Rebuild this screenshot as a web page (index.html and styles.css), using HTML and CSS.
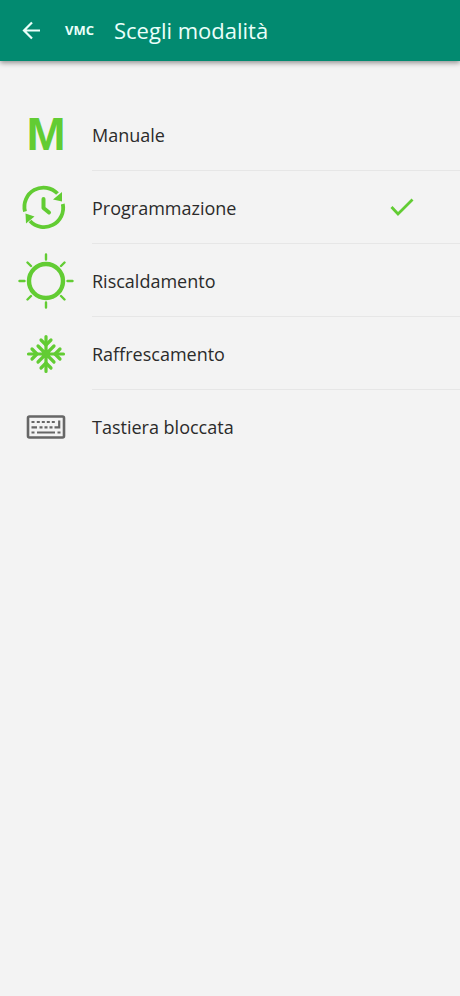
FILE: index.html
```
<!DOCTYPE html>
<html lang="it">
<head>
    <meta charset="UTF-8">
    <meta name="viewport" content="width=device-width, initial-scale=1.0">
    <title>Scegli modalità</title>
    <link rel="stylesheet" href="styles.css">
</head>
<body>
    <!-- Top bar -->
    <header class="app-bar">
        <button type="button" class="back" aria-label="Indietro">
            <svg width="20" height="20" viewBox="0 0 20 20" fill="none" stroke="currentColor" stroke-width="2.200">
                <path d="M19 10.500H3M11 2.500L3 10.500L11 18.500"/>
            </svg>
        </button>
        <span class="device">VMC</span>
        <h1 class="title">Scegli modalità</h1>
    </header>

    <!-- Mode list -->
    <main>
        <ul class="modes">
            <li class="mode">
                <button type="button" class="mode-button">
                    <span class="icon letter" aria-hidden="true">M</span>
                    <span class="label">Manuale</span>
                </button>
            </li>
            <li class="mode">
                <button type="button" class="mode-button" aria-pressed="true">
                    <svg class="icon" viewBox="0 0 60 60" fill="none" stroke="currentColor" stroke-width="3.800" aria-hidden="true">
                        <path d="M9 33.500A19.200 19.200 0 0 1 41.500 15.500M46.800 26A19.200 19.200 0 0 1 14 43"/>
                        <path d="M27.500 21V30L33 34.500" stroke-width="4" stroke-linecap="round" stroke-linejoin="round"/>
                        <path d="M46 14V23.500L37 21.500ZM9.500 35.500L18.500 38.500L10 45.500Z" fill="currentColor" stroke="none"/>
                    </svg>
                    <span class="label">Programmazione</span>
                    <svg class="check" width="24" height="20" viewBox="0 0 24 20" fill="none" stroke="currentColor" stroke-width="2.800" aria-hidden="true">
                        <path d="M1.500 9L8 16L22.500 1.500"/>
                    </svg>
                </button>
            </li>
            <li class="mode">
                <button type="button" class="mode-button">
                    <svg class="icon" viewBox="0 0 60 60" fill="none" stroke="currentColor" stroke-linecap="round" aria-hidden="true">
                        <circle cx="30" cy="30" r="17" stroke-width="4.400"/>
                        <path d="M30 3.500V8.500M30 51.500V56.500M3.500 30H8.500M51.500 30H56.500M11.500 11.500L15 15M45 45L48.500 48.500M48.500 11.500L45 15M15 45L11.500 48.500" stroke-width="2.400"/>
                    </svg>
                    <span class="label">Riscaldamento</span>
                </button>
            </li>
            <li class="mode">
                <button type="button" class="mode-button">
                    <svg class="icon" viewBox="0 0 60 60" fill="none" stroke="currentColor" stroke-width="3.200" stroke-linecap="round" stroke-linejoin="round" aria-hidden="true">
                        <path d="M30 12.500V47.500M12.500 30H47.500M22 22L38 38M38 22L22 38"/>
                        <path d="M25 16L30 21L35 16M25 44L30 39L35 44M16 25L21 30L16 35M44 25L39 30L44 35"/>
                    </svg>
                    <span class="label">Raffrescamento</span>
                </button>
            </li>
            <li class="mode">
                <button type="button" class="mode-button">
                    <svg class="icon keyboard" viewBox="0 0 60 60" fill="none" stroke="currentColor" stroke-width="2.600" aria-hidden="true">
                        <rect x="12" y="19.500" width="36" height="21" rx="1.500"/>
                        <path d="M15.500 25h3M20.800 25h3M25.800 25h3M30.800 25h3M35.800 25h3M15.500 30.300h5.500M23.500 30.300h3M28.500 30.300h3M33.500 30.300h3M38.500 30.300H43.200V23.500M15.500 35.500h3M21 35.500H39M41.500 35.500h3" stroke-width="2.200"/>
                    </svg>
                    <span class="label">Tastiera bloccata</span>
                </button>
            </li>
        </ul>
    </main>
</body>
</html>
```

FILE: styles.css
```
/* Basic page settings */
body {
    margin: 0;
    min-height: 100vh;
    background: #f3f3f3;
    color: #2b2b2b;
    font-family: "Open Sans", "Noto Sans", sans-serif;
}

button {
    margin: 0;
    padding: 0;
    border: 0;
    background: none;
    color: inherit;
    font: inherit;
    cursor: pointer;
}

/* Top bar */
.app-bar {
    display: flex;
    align-items: center;
    box-sizing: border-box;
    height: 61px;
    padding: 0 21px 2px;
    background: #028a70;
    color: #eafffa;
    box-shadow: 0 2px 5px rgba(0, 0, 0, 0.4);
}

.back {
    display: flex;
    margin-right: 24px;
}

.device {
    margin-right: 20px;
    font-size: 13px;
    font-weight: 700;
}

.title {
    margin: 0;
    font-size: 22px;
    font-weight: 400;
}

/* Mode list */
.modes {
    margin: 0;
    padding: 37px 0 0;
    list-style: none;
}

.mode-button {
    display: flex;
    align-items: center;
    width: 100%;
    height: 73px;
    padding-left: 16px;
    text-align: left;
}

.icon {
    flex: none;
    width: 60px;
    height: 60px;
    margin-right: 16px;
    color: #62cc33;
}

/* Manual mode uses a plain letter as its icon */
.letter {
    font-family: "Liberation Sans", Arial, sans-serif;
    font-size: 47px;
    font-weight: 700;
    line-height: 58px;
    text-align: center;
}

.keyboard {
    color: #666;
}

.label {
    flex: 1;
    font-size: 18px;
    line-height: 24px;
}

/* Divider starts at the text, not under the icon */
.mode:not(:last-child) {
    background: linear-gradient(#e6e6e6, #e6e6e6) 92px 100% / 100% 1px no-repeat;
}

.check {
    margin-right: 46px;
    color: #62cc33;
}
```
